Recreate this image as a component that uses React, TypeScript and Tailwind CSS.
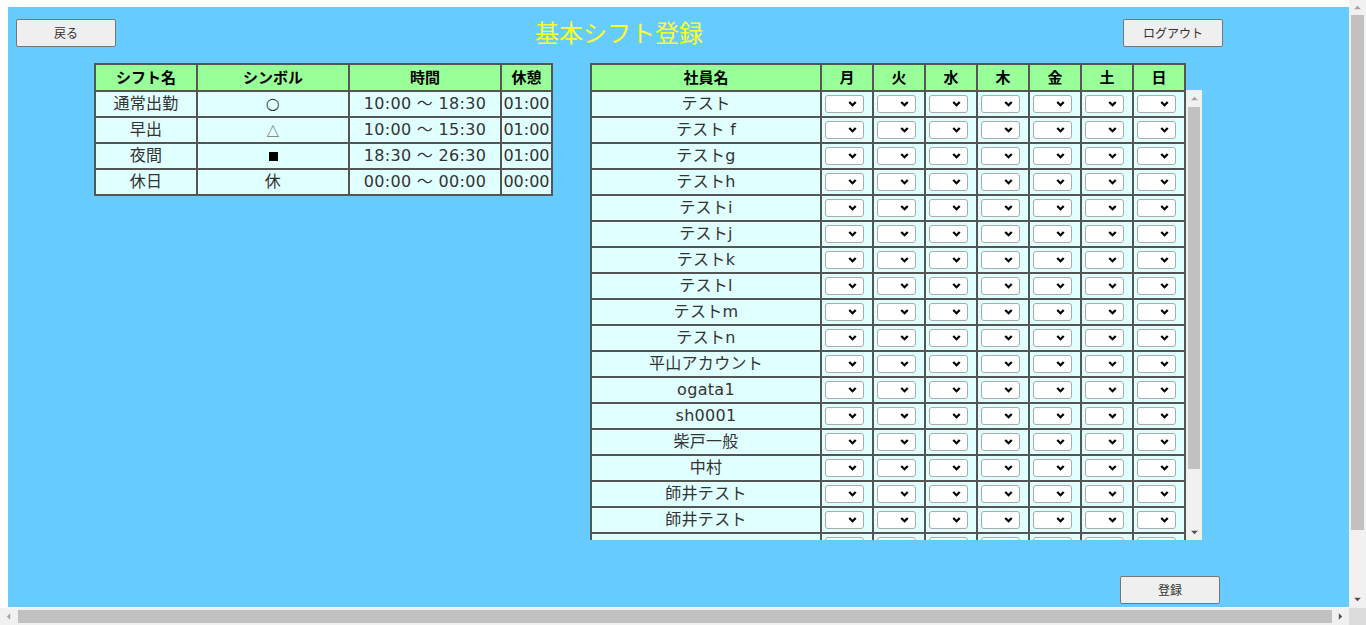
import React from "react";

const shifts = [
  { name: "通常出勤", symbol: "○", time: "10:00 ～ 18:30", rest: "01:00" },
  { name: "早出", symbol: "△", time: "10:00 ～ 15:30", rest: "01:00" },
  { name: "夜間", symbol: "■", time: "18:30 ～ 26:30", rest: "01:00" },
  { name: "休日", symbol: "休", time: "00:00 ～ 00:00", rest: "00:00" },
];

// 18件目は下端で切れて名前は見えない
const staff = [
  "テスト",
  "テスト f",
  "テストg",
  "テストh",
  "テストi",
  "テストj",
  "テストk",
  "テストl",
  "テストm",
  "テストn",
  "平山アカウント",
  "ogata1",
  "sh0001",
  "柴戸一般",
  "中村",
  "師井テスト",
  "師井テスト",
  "",
];

const days = ["月", "火", "水", "木", "金", "土", "日"];

const font = "font-['Noto_Sans_CJK_JP','Noto_Sans',sans-serif]";
const cellFont = "font-['DejaVu_Sans','Noto_Sans_CJK_JP',sans-serif]";

const Button: React.FC<{ label: string; className?: string }> = ({ label, className }) => (
  <button
    className={`h-[28px] w-[100px] shrink-0 rounded-[2px] border border-[#767676] bg-[#efefef] text-[12px] text-[#333] ${className ?? ""}`}
  >
    {label}
  </button>
);

const ShiftSelect: React.FC = () => (
  <div className="relative h-[18px] w-[39px]">
    <select className="h-full w-full appearance-none rounded-[3px] border-[1.5px] border-[#aaa] bg-white" />
    <svg
      viewBox="0 0 10 7"
      className="pointer-events-none absolute right-[7px] top-[6px] h-[6px] w-[9px]"
    >
      <path d="M1.2 1.2l3.8 3.8 3.8-3.8" fill="none" stroke="#000" strokeWidth="2.6" />
    </svg>
  </div>
);

const Arrow: React.FC<{ dir: "up" | "down" | "left" | "right"; color: string }> = ({ dir, color }) => {
  const pts = {
    up: "0,5 4,1 8,5",
    down: "0,1 4,5 8,1",
    left: "5,0 1,4 5,8",
    right: "1,0 5,4 1,8",
  }[dir];
  const vertical = dir === "up" || dir === "down";
  return (
    <svg
      viewBox={vertical ? "0 0 8 6" : "0 0 6 8"}
      className={vertical ? "h-[5px] w-[7px]" : "h-[7px] w-[5px]"}
    >
      <polygon points={pts} fill={color} />
    </svg>
  );
};

const headCell =
  "flex h-[25px] items-center justify-center bg-[#99ff99] text-[15px] font-bold text-black";
const bodyCell = `flex h-[24px] items-center justify-center bg-[#e0ffff] text-[16px] tracking-[0.3px] text-[#333] ${cellFont}`;

export default function App() {
  return (
    <div className={`flex h-[625px] w-full flex-col overflow-hidden bg-white ${font}`}>
      <div className="flex min-h-0 flex-1">
        {/* page */}
        <div className="flex-1 pb-[1px] pl-[8px] pt-[7px]">
          <div className="flex h-full flex-col bg-[#66ccff] pl-[8px] pt-[12px]">
            {/* header */}
            <div className="flex h-[28px] items-center">
              <Button label="戻る" />
              <h1 className="-mt-[2px] ml-[419px] w-[170px] whitespace-nowrap text-[24px] leading-[28px] text-[#ffff22]">
                基本シフト登録
              </h1>
              <Button label="ログアウト" className="ml-[418px]" />
            </div>

            <div className="mt-[16px] flex items-start">
              {/* shift master */}
              <div className="ml-[78px] grid grid-cols-[100px_150px_150px_49px] gap-[2px] bg-[#555] p-[2px] text-center">
                {["シフト名", "シンボル", "時間", "休憩"].map((h) => (
                  <div key={h} className={headCell}>
                    {h}
                  </div>
                ))}
                {shifts.map((s) => (
                  <React.Fragment key={s.name}>
                    <div className={bodyCell}>{s.name}</div>
                    <div className={bodyCell}>
                      {s.symbol === "■" ? (
                        <span className="block h-[9px] w-[9px] bg-black" />
                      ) : s.symbol === "△" ? (
                        <span className="text-[#888]">{s.symbol}</span>
                      ) : (
                        s.symbol
                      )}
                    </div>
                    <div className={bodyCell}>{s.time}</div>
                    <div className={`${bodyCell} tracking-normal`}>{s.rest}</div>
                  </React.Fragment>
                ))}
              </div>

              {/* staff weekly shifts */}
              <div className="ml-[37px] flex flex-col">
                <div className="grid w-[596px] grid-cols-[228px_repeat(7,50px)] gap-[2px] bg-[#555] p-[2px] pb-0 text-center">
                  {["社員名", ...days].map((h) => (
                    <div key={h} className={headCell}>
                      {h}
                    </div>
                  ))}
                </div>
                <div className="flex h-[450px] overflow-hidden">
                  <div className="h-full w-[596px] overflow-hidden">
                    <div className="grid grid-cols-[228px_repeat(7,50px)] gap-[2px] bg-[#555] p-[2px] text-center">
                      {staff.map((name, i) => (
                        <React.Fragment key={i}>
                          <div className={bodyCell}>{name}</div>
                          {days.map((d) => (
                            <div key={d} className="flex h-[24px] items-center bg-[#e0ffff] pl-[3px]">
                              <ShiftSelect />
                            </div>
                          ))}
                        </React.Fragment>
                      ))}
                    </div>
                  </div>
                  {/* inner scrollbar */}
                  <div className="flex w-[16px] flex-col items-center bg-[#f1f1f1]">
                    <div className="flex h-[16px] items-center justify-center">
                      <Arrow dir="up" color="#a3a3a3" />
                    </div>
                    <div className="mt-[1px] h-[362px] w-[12px] bg-[#c1c1c1]" />
                    <div className="flex-1" />
                    <div className="flex h-[16px] items-center justify-center">
                      <Arrow dir="down" color="#505050" />
                    </div>
                  </div>
                </div>
              </div>
            </div>

            <div className="mt-[36px] flex">
              <Button label="登録" className="ml-[1104px] w-[99px]" />
            </div>
          </div>
        </div>

        {/* page vertical scrollbar */}
        <div className="flex w-[17px] flex-col items-center bg-[#f1f1f1]">
          <div className="flex h-[15px] items-center justify-center">
            <Arrow dir="up" color="#a3a3a3" />
          </div>
          <div className="h-[515px] w-[13px] bg-[#c1c1c1]" />
          <div className="flex-1" />
          <div className="flex h-[17px] items-center justify-center">
            <Arrow dir="down" color="#505050" />
          </div>
        </div>
      </div>

      {/* page horizontal scrollbar */}
      <div className="flex h-[17px] bg-[#f1f1f1]">
        <div className="flex flex-1 items-center">
          <div className="flex w-[17px] justify-center">
            <Arrow dir="left" color="#a3a3a3" />
          </div>
          <div className="ml-[1px] h-[13px] w-[1314px] bg-[#c1c1c1]" />
          <div className="flex flex-1 justify-center">
            <Arrow dir="right" color="#505050" />
          </div>
        </div>
        <div className="w-[17px] bg-[#dcdcdc]" />
      </div>
    </div>
  );
}
